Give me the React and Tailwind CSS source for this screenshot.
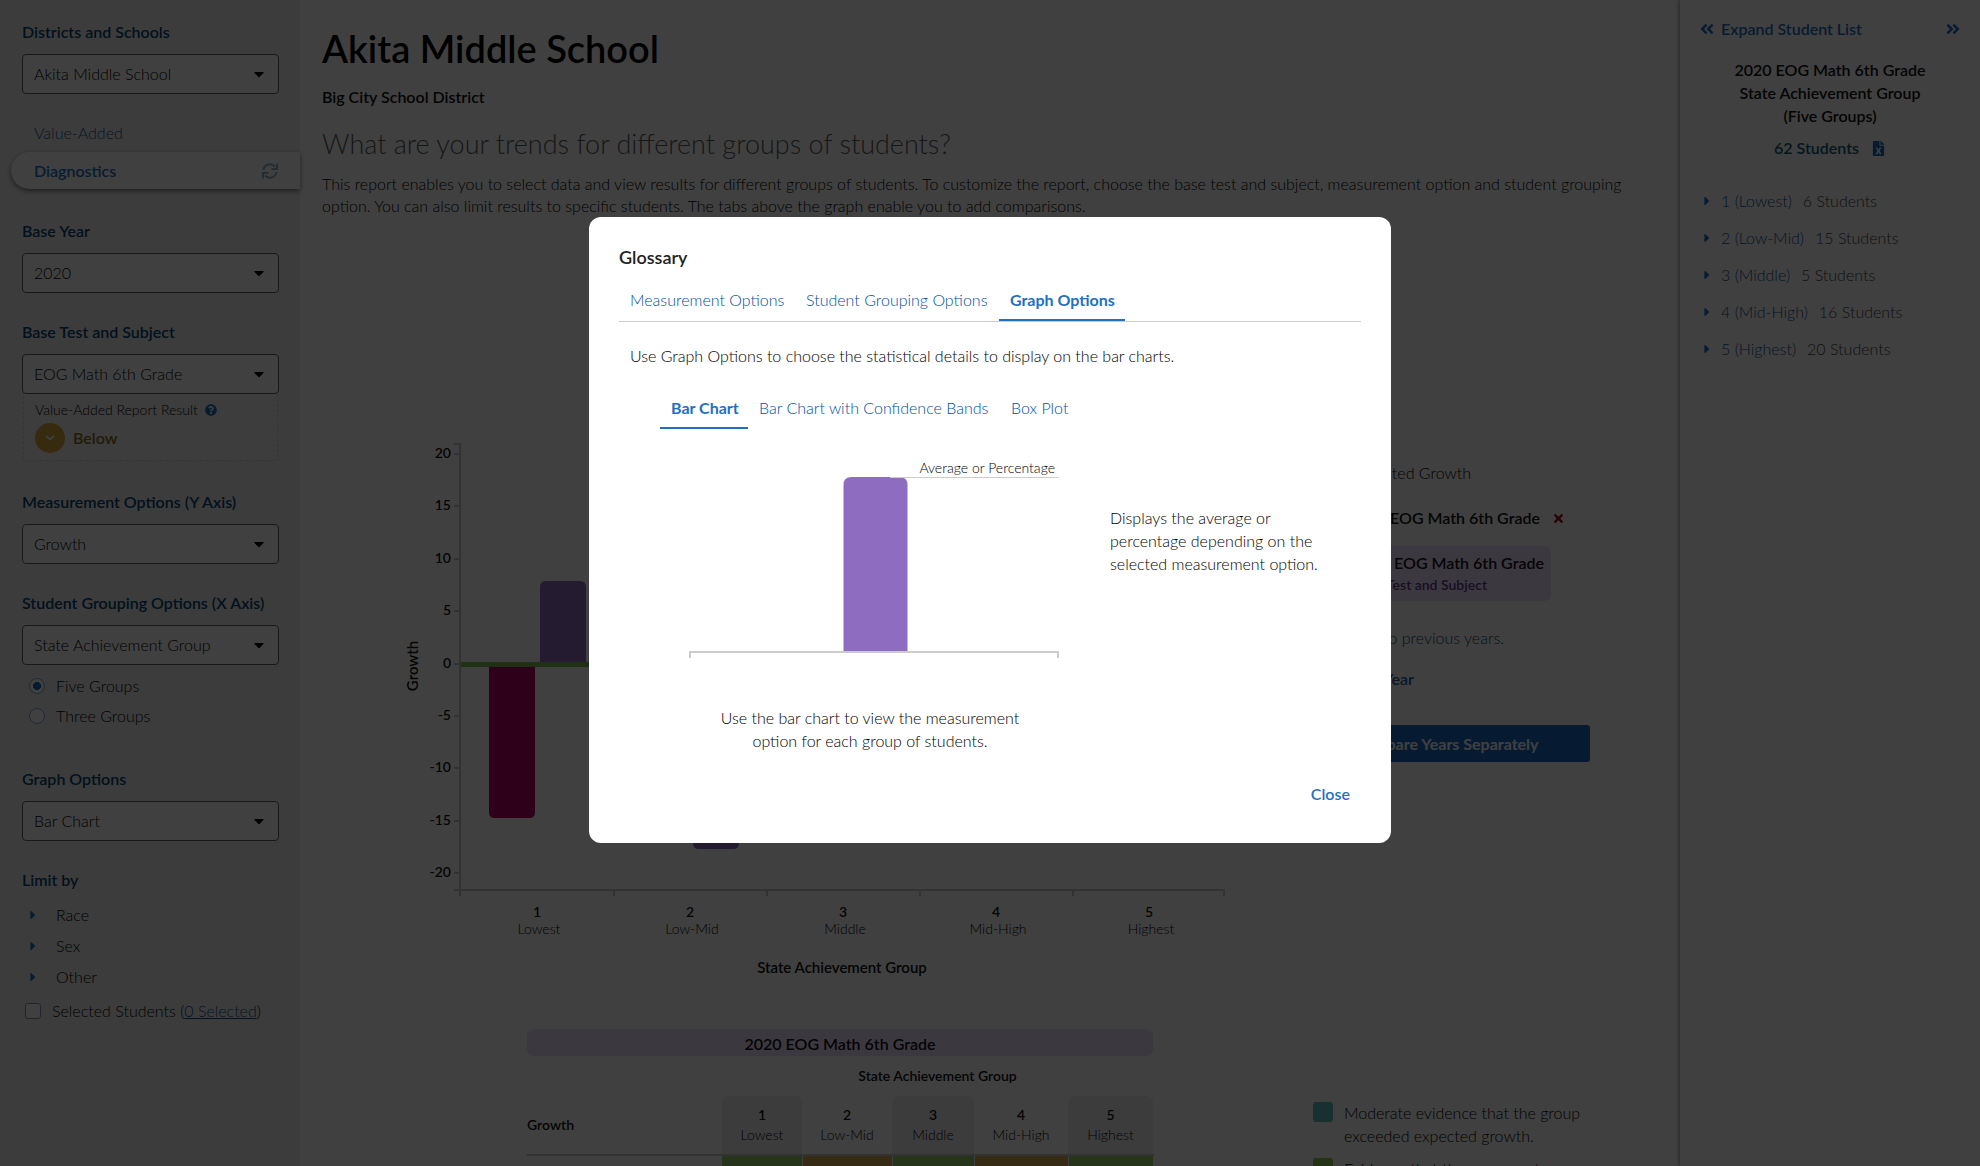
import React from "react";
import {
  FaAngleDoubleLeft,
  FaAngleDoubleRight,
  FaCaretDown,
  FaCaretRight,
  FaChevronDown,
  FaFileExcel,
  FaQuestionCircle,
  FaTimes,
} from "react-icons/fa";

const limits = ["Race", "Sex", "Other"];

const groups = [
  { number: "1", name: "Lowest", students: 6 },
  { number: "2", name: "Low-Mid", students: 15 },
  { number: "3", name: "Middle", students: 5 },
  { number: "4", name: "Mid-High", students: 16 },
  { number: "5", name: "Highest", students: 20 },
];

function SelectField({ id, label, value }) {
  return (
    <div>
      <label htmlFor={id} className="block font-semibold text-[#064474]">
        {label}
      </label>
      <div className="relative mt-[11px]">
        <select
          id={id}
          defaultValue={value}
          className="block h-10 w-full appearance-none rounded border border-[#606060] bg-white pr-8 pl-[11px] text-black"
        >
          <option>{value}</option>
        </select>
        <FaCaretDown className="pointer-events-none absolute top-3 right-[12px] size-4 text-black" />
      </div>
    </div>
  );
}

function Radio({ label, checked }) {
  return (
    <label className="flex h-[30px] items-center gap-[11px] text-black">
      <input
        type="radio"
        name="group-count"
        defaultChecked={checked}
        className="size-4 appearance-none rounded-full border border-[#7da7d2] bg-white checked:bg-[radial-gradient(circle,#1b6ec2_4px,transparent_4px)]"
      />
      {label}
    </label>
  );
}

function Sidebar() {
  return (
    <aside className="w-[300px] shrink-0 bg-[#f0f0f0] pt-[21px]">
      <div className="pr-[21px] pl-[22px]">
        <SelectField id="school" label="Districts and Schools" value="Akita Middle School" />
      </div>
      <nav className="mt-7 pl-[11px]">
        <a href="#value-added" className="block pl-[23px] text-[#0f5298]">
          Value-Added
        </a>
        <a
          href="#diagnostics"
          className="mt-2 flex h-[37px] items-center justify-between rounded-l-full bg-white pr-[22px] pl-[23px] font-semibold text-[#1f70bf] shadow-[0_2px_5px_rgba(0,0,0,0.5)]"
        >
          Diagnostics
          <svg viewBox="0 0 16 16" className="size-4 text-[#8fb0c9]" fill="none" stroke="currentColor" strokeWidth="2" aria-hidden="true">
            <path d="M1.500 7A6.500 6.500 0 0 1 13 3.700M14.500 9A6.500 6.500 0 0 1 3 12.300" />
            <path d="M15 0.500V6H9.500M1 15.500V10H6.500" />
          </svg>
        </a>
      </nav>
      <div className="mt-[31px] pr-[21px] pl-[22px]">
        <SelectField id="year" label="Base Year" value="2020" />
        <div className="mt-7">
          <SelectField id="test" label="Base Test and Subject" value="EOG Math 6th Grade" />
        </div>
        <div className="mx-px h-[67px] rounded-b border border-t-0 border-dashed border-[#d4d4d4] bg-[#f2f2f2] px-[11px] pt-[5px]">
          <div className="flex items-center gap-[7px] text-sm leading-[22px] text-black">
            Value-Added Report Result
            <FaQuestionCircle className="size-3 text-[#1f70bf]" />
          </div>
          <div className="mt-[2px] flex items-center gap-2 font-semibold text-[#8a6d20]">
            <span className="flex size-[30px] items-center justify-center rounded-full bg-[#d8a83c] text-white">
              <FaChevronDown className="size-[10px]" />
            </span>
            Below
          </div>
        </div>
        <div className="mt-[30px]">
          <SelectField id="measurement" label="Measurement Options (Y Axis)" value="Growth" />
        </div>
        <div className="mt-7">
          <SelectField id="grouping" label="Student Grouping Options (X Axis)" value="State Achievement Group" />
        </div>
        <div className="mt-[6px] pl-[7px]">
          <Radio label="Five Groups" checked />
          <Radio label="Three Groups" />
        </div>
        <div className="mt-[37px]">
          <SelectField id="graph" label="Graph Options" value="Bar Chart" />
        </div>
        <h3 className="mt-7 font-semibold text-[#064474]">Limit by</h3>
        <div className="mt-2">
          {limits.map((l) => (
            <button key={l} className="flex h-[31px] items-center gap-4 pl-1 text-black">
              <FaCaretRight className="size-[14px] text-[#1f70bf]" />
              {l}
            </button>
          ))}
        </div>
        <div className="mt-2 flex items-center gap-[11px] pl-[3px] text-black">
          <input
            id="selected"
            type="checkbox"
            className="size-4 appearance-none rounded-[3px] border border-[#7d93a8] bg-white"
          />
          <div className="whitespace-nowrap">
            <label htmlFor="selected">Selected Students</label> (
            <a href="#selected" className="text-[#0f5298] underline">0 Selected</a>)
          </div>
        </div>
      </div>
    </aside>
  );
}

const yTicks = [20, 15, 10, 5, 0, -5, -10, -15, -20];
const xEdges = [50, 204, 357, 510, 663, 814];

function GrowthChart() {
  return (
    <svg width="860" height="560" viewBox="-10 0 860 560" className="shrink-0" role="img" aria-label="Growth by State Achievement Group">
      <g stroke="#c8c8c8" strokeWidth="2" fill="none">
        <path d="M44 24H50V470H815M44 470H50" />
        {xEdges.map((x) => (
          <path key={x} d={`M${x} 470V476`} />
        ))}
        {yTicks.map((t, i) => (
          <path key={t} d={`M44 ${Math.round(34 + i * 52.4)}H50`} />
        ))}
      </g>
      <g fontSize="14" fontWeight="600" fill="#111" textAnchor="end">
        {yTicks.map((t, i) => (
          <text key={t} x="41" y={Math.round(38 + i * 52.4)}>
            {t}
          </text>
        ))}
      </g>
      <path d="M79 245H125V392Q125 398 119 398H85Q79 398 79 392Z" fill="#b8006a" />
      <path d="M130 242V167Q130 161 136 161H170Q176 161 176 167V242Z" fill="#8e6cc0" />
      <path d="M283 245H329V423Q329 429 323 429H289Q283 429 283 423Z" fill="#8e6cc0" />
      <rect x="51" y="242" width="763" height="5" fill="#7cc050" />
      <text transform="translate(8 246) rotate(-90)" fontSize="15" fontWeight="600" fill="#111" textAnchor="middle">
        Growth
      </text>
      {groups.map((g, i) => (
        <g key={g.number} textAnchor="middle" fontSize="14">
          <text x={127 + i * 153} y="497" fontWeight="600" fill="#111">
            {g.number}
          </text>
          <text x={129 + i * 153} y="514" fill="#000">
            {g.name}
          </text>
        </g>
      ))}
      <text x="432" y="553" fontSize="15" fontWeight="600" fill="#111" textAnchor="middle">
        State Achievement Group
      </text>
    </svg>
  );
}

function ResultsTable() {
  return (
    <div className="w-[626px]">
      <h3 className="h-[27px] rounded-md bg-[#f0e0fb] text-center leading-[29px] font-semibold text-[#111]">
        2020 EOG Math 6th Grade
      </h3>
      <table className="mt-[9px] w-full table-fixed border-collapse text-sm">
        <colgroup>
          <col className="w-[195px]" />
          <col className="w-[80px]" />
          <col className="w-[90px]" />
          <col className="w-[82px]" />
          <col className="w-[94px]" />
          <col className="w-[85px]" />
        </colgroup>
        <thead>
          <tr>
            <td />
            <th colSpan={5} className="h-[31px] pb-[10px] font-semibold text-[#111]">
              State Achievement Group
            </th>
          </tr>
          <tr className="border-b-2 border-[#c8c8c8]">
            <th className="h-[59px] text-left font-semibold text-[#111]">Growth</th>
            {groups.map((g, i) => (
              <th key={g.number} className={`p-0 font-light ${i % 2 ? "" : "rounded-t-md bg-[#f0f0f0]"}`}>
                <div className="leading-5 font-semibold text-[#111]">{g.number}</div>
                <div className="leading-5 text-black">{g.name}</div>
              </th>
            ))}
          </tr>
        </thead>
        <tbody>
          <tr>
            <td className="h-10" />
            {groups.map((g, i) => (
              <td key={g.number} className={`border-r border-white ${i % 2 ? "bg-[#d8b058]" : "bg-[#98d070]"}`} />
            ))}
          </tr>
        </tbody>
      </table>
    </div>
  );
}

function Main() {
  return (
    <main className="min-w-0 flex-1 pl-[22px]">
      <h1 className="mt-6 text-[38px] leading-[48px] font-semibold text-black">Akita Middle School</h1>
      <p className="mt-[14px] font-semibold text-[#111]">Big City School District</p>
      <h2 className="mt-5 text-[27px] leading-8 text-[#5c5c5c]">
        What are your trends for different groups of students?
      </h2>
      <p className="mt-[13px] max-w-[1300px] text-black">
        This report enables you to select data and view results for different groups of students. To customize the
        report, choose the base test and subject, measurement option and student grouping option. You can also limit
        results to specific students. The tabs above the graph enable you to add comparisons.
      </p>
      <div className="mt-[203px] flex pl-[78px]">
        <GrowthChart />
        <div className="mt-[42px] flex w-[330px] flex-col items-end whitespace-nowrap">
          <p className="pr-[119px] text-black">Expected Growth</p>
          <div className="mt-[23px] flex items-center gap-3 pr-[25px] font-semibold text-[#111]">
            2020 EOG Math 6th Grade
            <button aria-label="Remove">
              <FaTimes className="size-[13px] text-[#b00020]" />
            </button>
          </div>
          <div className="mt-[17px] mr-[39px] h-[55px] w-[220px] rounded-md bg-[#f0e0fb] pt-[6px]">
            <p className="pr-[7px] text-right font-semibold text-[#111]">2020 EOG Math 6th Grade</p>
            <p className="pr-[64px] text-right text-sm leading-[22px] font-semibold text-[#5c3a86]">Base Test and Subject</p>
          </div>
          <p className="mt-[26px] pr-[86px] text-[#0a4468]">Compare to previous years.</p>
          <button className="mt-[19px] mr-[176px] font-semibold text-[#1c5f96]">Add Year</button>
          <button className="mt-[35px] h-[37px] w-[288px] rounded-[3px] bg-[#1b6ec2] font-bold text-white">
            Compare Years Separately
          </button>
        </div>
      </div>
      <div className="mt-[49px] flex gap-[160px] pl-[205px]">
        <ResultsTable />
        <ul className="mt-[72px] space-y-[10px] leading-[23px] text-black">
          <li className="flex gap-[11px]">
            <span className="mt-px size-5 rounded-[3px] bg-[#60c0c0]" />
            <p className="w-[250px]">Moderate evidence that the group exceeded expected growth.</p>
          </li>
          <li className="flex gap-[11px]">
            <span className="mt-px size-5 rounded-[3px] bg-[#90c858]" />
            <p className="w-[250px]">Evidence that the group met expected growth.</p>
          </li>
        </ul>
      </div>
    </main>
  );
}

function StudentPanel() {
  return (
    <aside className="w-[300px] shrink-0 bg-white pt-[18px] shadow-[0_0_5px_rgba(0,0,0,0.6)]">
      <div className="flex items-center justify-between pr-[19px] pl-[19px] text-[#1f70bf]">
        <button className="flex items-center gap-[6px] font-semibold">
          <FaAngleDoubleLeft className="size-4" />
          Expand Student List
        </button>
        <button aria-label="Collapse">
          <FaAngleDoubleRight className="size-4" />
        </button>
      </div>
      <h2 className="mt-[18px] text-center leading-[23px] font-semibold text-[#111]">
        2020 EOG Math 6th Grade
        <br />
        State Achievement Group
        <br />
        (Five Groups)
      </h2>
      <div className="mt-[10px] flex items-center justify-center gap-3 font-semibold text-[#125a78]">
        62 Students
        <button aria-label="Export to Excel">
          <FaFileExcel className="size-[15px] text-[#1b6ec2]" />
        </button>
      </div>
      <ul className="mt-[23px]">
        {groups.map((g) => (
          <li key={g.number}>
            <button className="flex h-[37px] items-center pl-[20px] text-[#0f5298]">
              <FaCaretRight className="mr-[7px] size-[14px] text-[#1f70bf]" />
              {g.number} ({g.name})<span className="ml-[11px] text-[#444]">{g.students} Students</span>
            </button>
          </li>
        ))}
      </ul>
    </aside>
  );
}

const tab = "h-[38px] px-[11px] text-left whitespace-nowrap";

function Glossary() {
  return (
    <div className="fixed inset-0 flex items-start justify-center bg-black/75 pt-[217px]">
      <div role="dialog" aria-labelledby="glossary-title" className="w-[802px] rounded-xl bg-white px-[30px] pt-7 pb-[38px] text-black">
        <h2 id="glossary-title" className="text-lg leading-6 font-semibold text-[#222]">
          Glossary
        </h2>
        <div role="tablist" className="mt-[14px] flex border-b border-[#ccc] text-[#004f9f]">
          <button role="tab" className={`${tab} w-[176px] pb-1`}>Measurement Options</button>
          <button role="tab" className={`${tab} w-[204px] pb-1`}>Student Grouping Options</button>
          <button role="tab" aria-selected="true" className={`${tab} w-[126px] border-b-2 border-[#1f70bf] pb-[2px] font-bold text-[#1f70bf]`}>
            Graph Options
          </button>
        </div>
        <p className="mt-[22px] px-[11px] leading-[23px]">
          Use Graph Options to choose the statistical details to display on the bar charts.
        </p>
        <div role="tablist" className="mt-6 ml-[41px] flex text-[#004f9f]">
          <button role="tab" aria-selected="true" className={`${tab} w-[88px] border-b-2 border-[#1f70bf] pb-[2px] font-bold text-[#1f70bf]`}>
            Bar Chart
          </button>
          <button role="tab" className={`${tab} w-[252px] pb-1`}>Bar Chart with Confidence Bands</button>
          <button role="tab" className={`${tab} pb-1`}>Box Plot</button>
        </div>
        <div className="flex pl-[69px]">
          <svg width="374" height="230" viewBox="0 0 374 230" className="shrink-0" role="img" aria-label="Sample bar chart">
            <path d="M155.500 222V56Q155.500 48 163.500 48H211.500Q219.500 48 219.500 56V222Z" fill="#8e6cc0" />
            <path d="M202 48.500H371" stroke="#ccc" />
            <path d="M2 229V223H370V229" stroke="#ccc" strokeWidth="2" fill="none" />
            <text x="367" y="44" fontSize="14" fill="#000" textAnchor="end">
              Average or Percentage
            </text>
          </svg>
          <p className="mt-[77px] ml-12 w-[220px] leading-[23px]">
            Displays the average or percentage depending on the selected measurement option.
          </p>
        </div>
        <p className="mt-[47px] ml-[96px] w-[310px] text-center leading-[23px]">
          Use the bar chart to view the measurement option for each group of students.
        </p>
        <div className="mt-[31px] flex justify-end pr-[11px]">
          <button className="font-semibold text-[#1f70bf]">Close</button>
        </div>
      </div>
    </div>
  );
}

export default function App() {
  return (
    <div className="flex h-screen overflow-hidden bg-white font-['Lato',sans-serif] text-base leading-[22px] font-light">
      <Sidebar />
      <Main />
      <StudentPanel />
      <Glossary />
    </div>
  );
}
